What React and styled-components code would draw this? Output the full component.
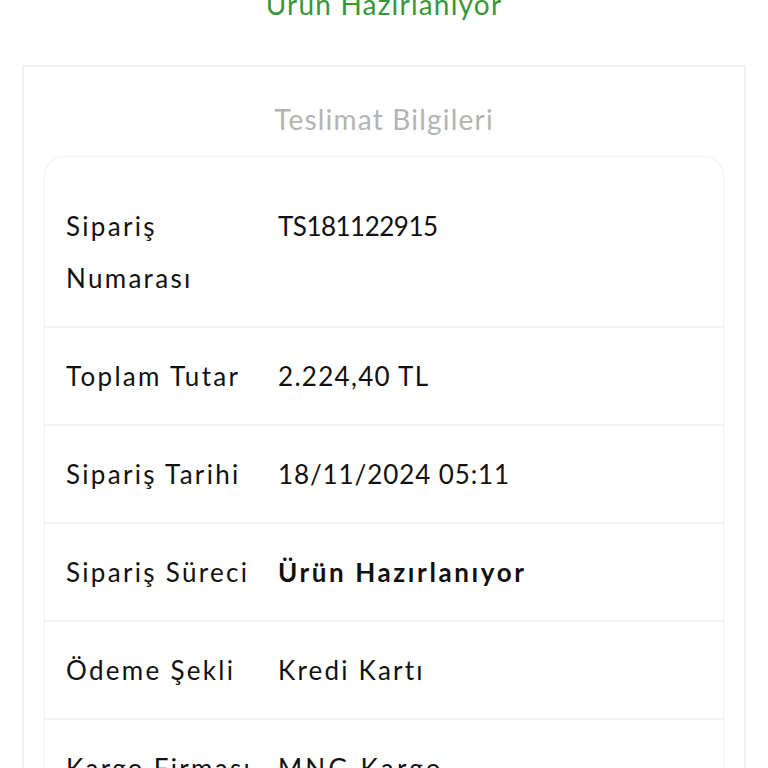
import React from "react";
import styled, { createGlobalStyle } from "styled-components";

const GlobalStyle = createGlobalStyle`
  body {
    margin: 0;
    background: #ffffff;
    font-family: Lato, "Noto Sans", sans-serif;
    color: #111111;
  }
`;

const Page = styled.div`
  display: flex;
  flex-direction: column;
  overflow: hidden;
  height: 768px;
`;

const Status = styled.h2`
  margin: -22px 0 35px;
  text-align: center;
  font-size: 28px;
  font-weight: 400;
  line-height: 52px;
  letter-spacing: 1.2px;
  color: #389638;
`;

const Card = styled.div`
  margin: 0 22px;
  border: 2px solid #f0f0f0;
  padding: 0 20px;
`;

const CardTitle = styled.h3`
  margin: 26px 0 11px;
  text-align: center;
  font-size: 28px;
  font-weight: 400;
  line-height: 52px;
  letter-spacing: 1.2px;
  color: #b3b3b6;
`;

const Table = styled.div`
  border: 1px solid #f1f1f1;
  border-radius: 20px;
  padding-top: 21px;
`;

const Row = styled.div`
  display: grid;
  grid-template-columns: 212px 1fr;
  padding: 22px 21px;
  border-bottom: 2px solid #f3f3f3;
`;

const Label = styled.div`
  font-size: 26px;
  line-height: 52px;
  letter-spacing: 2.3px;
  color: #111111;
`;

const Value = styled.div`
  font-size: 26px;
  line-height: 52px;
  letter-spacing: ${(p) => p.$spacing}px;
  font-weight: ${(p) => (p.$bold ? 700 : 400)};
  color: #111111;
`;

const rows = [
  { label: "Sipariş Numarası", value: "TS181122915", spacing: -0.5 },
  { label: "Toplam Tutar", value: "2.224,40 TL", spacing: 1.3 },
  { label: "Sipariş Tarihi", value: "18/11/2024 05:11", spacing: 0.9 },
  { label: "Sipariş Süreci", value: "Ürün Hazırlanıyor", spacing: 2.6, bold: true },
  { label: "Ödeme Şekli", value: "Kredi Kartı", spacing: 2.2 },
  { label: "Kargo Firması", value: "MNG Kargo", spacing: 3.2 },
];

const App = () => {
  return (
    <Page>
      <GlobalStyle />
      <Status>Ürün Hazırlanıyor</Status>
      <Card>
        <CardTitle>Teslimat Bilgileri</CardTitle>
        <Table>
          {rows.map((r) => (
            <Row key={r.label}>
              <Label>{r.label}</Label>
              <Value $bold={r.bold} $spacing={r.spacing}>
                {r.value}
              </Value>
            </Row>
          ))}
        </Table>
      </Card>
    </Page>
  );
};

export default App;
